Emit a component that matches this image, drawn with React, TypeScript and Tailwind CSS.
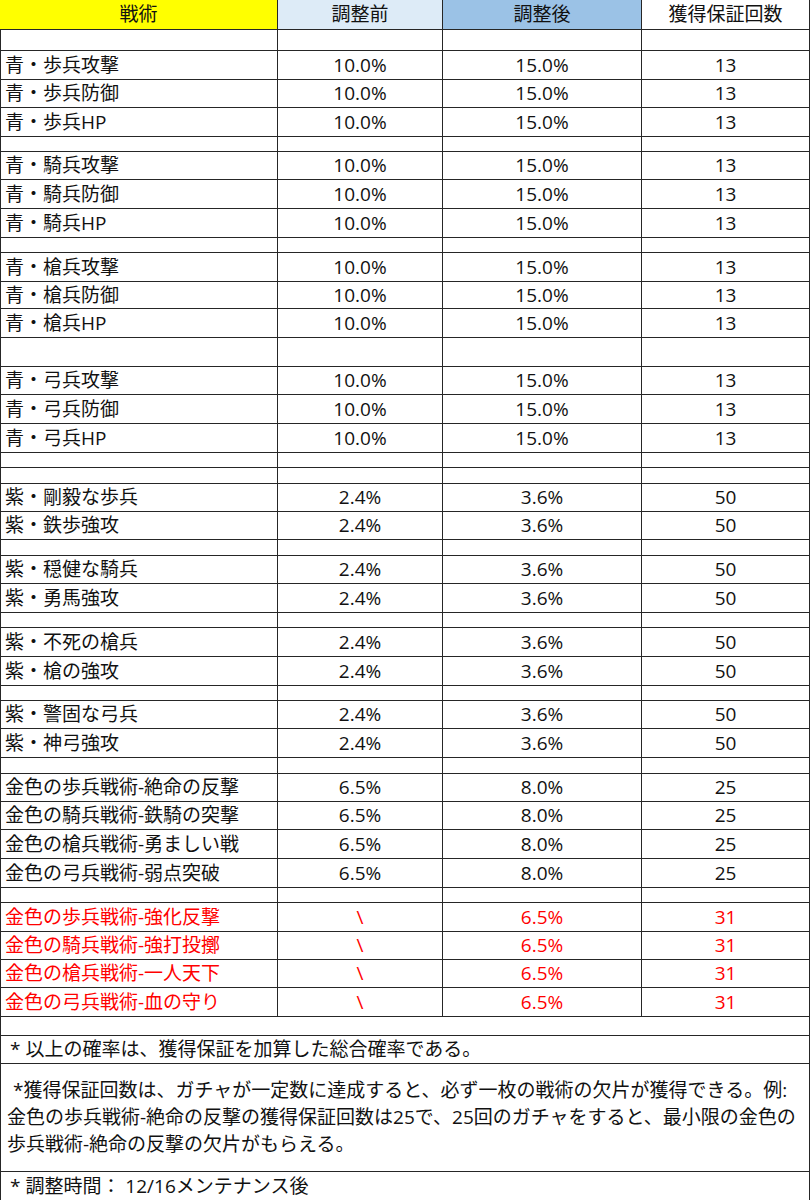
import React from "react";

type Row = {
  h: number;
  n?: string;
  a?: string;
  b?: string;
  c?: string;
  red?: boolean;
};

const H: Record<number, string> = {
  15: "h-[15px]",
  16: "h-[16px]",
  19: "h-[19px]",
  21: "h-[21px]",
  27: "h-[27px]",
  28: "h-[28px]",
  29: "h-[29px]",
  30: "h-[30px]",
};

const blue = (n: string, h: number): Row => ({ n, a: "10.0%", b: "15.0%", c: "13", h });
const purple = (n: string, h: number): Row => ({ n, a: "2.4%", b: "3.6%", c: "50", h });
const gold = (n: string, h: number): Row => ({ n, a: "6.5%", b: "8.0%", c: "25", h });
const red = (n: string, h: number): Row => ({ n, a: "\\", b: "6.5%", c: "31", h, red: true });

const rows: Row[] = [
  { h: 21 },
  blue("青・歩兵攻撃", 29),
  blue("青・歩兵防御", 28),
  blue("青・歩兵HP", 29),
  { h: 15 },
  blue("青・騎兵攻撃", 28),
  blue("青・騎兵防御", 29),
  blue("青・騎兵HP", 29),
  { h: 15 },
  blue("青・槍兵攻撃", 29),
  blue("青・槍兵防御", 27),
  blue("青・槍兵HP", 29),
  { h: 29 },
  blue("青・弓兵攻撃", 28),
  blue("青・弓兵防御", 29),
  blue("青・弓兵HP", 29),
  { h: 15 },
  { h: 16 },
  purple("紫・剛毅な歩兵", 28),
  purple("紫・鉄歩強攻", 28),
  { h: 16 },
  purple("紫・穏健な騎兵", 28),
  purple("紫・勇馬強攻", 29),
  { h: 15 },
  purple("紫・不死の槍兵", 29),
  purple("紫・槍の強攻", 29),
  { h: 15 },
  purple("紫・警固な弓兵", 28),
  purple("紫・神弓強攻", 29),
  { h: 16 },
  gold("金色の歩兵戦術-絶命の反撃", 28),
  gold("金色の騎兵戦術-鉄騎の突撃", 28),
  gold("金色の槍兵戦術-勇ましい戦", 29),
  gold("金色の弓兵戦術-弱点突破", 29),
  { h: 15 },
  red("金色の歩兵戦術-強化反撃", 29),
  red("金色の騎兵戦術-強打投擲", 28),
  red("金色の槍兵戦術-一人天下", 28),
  red("金色の弓兵戦術-血の守り", 29),
];

const grid = "grid grid-cols-[278px_165px_199px_168px] w-[810px] border-b border-[#262626]";

function DataRow({ r }: { r: Row }) {
  const color = r.red ? "text-[#ff0000]" : "text-[#111111]";
  return (
    <div className={`${grid} ${H[r.h]} ${color}`}>
      <div className="border-l border-r border-[#262626] flex items-center pl-[4px] whitespace-nowrap">{r.n ?? ""}</div>
      <div className="border-r border-[#262626] flex items-center justify-center">{r.a ?? ""}</div>
      <div className="border-r border-[#262626] flex items-center justify-center">{r.b ?? ""}</div>
      <div className="border-r border-[#262626] flex items-center justify-center">{r.c ?? ""}</div>
    </div>
  );
}

export default function App() {
  return (
    <div
      className="w-[811px] h-[1200px] bg-white text-[19px] leading-[27px] text-[#111111] overflow-hidden"
      style={{ fontFamily: '"Open Sans", "Noto Sans CJK JP", sans-serif' }}
    >
      <div className={`${grid} h-[30px]`}>
        <div className="bg-[#ffff00] border-r border-[#262626] flex items-center justify-center">戦術</div>
        <div className="bg-[#ddebf7] border-r border-[#262626] flex items-center justify-center">調整前</div>
        <div className="bg-[#9bc2e6] border-r border-[#262626] flex items-center justify-center">調整後</div>
        <div className="bg-white border-r border-[#262626] flex items-center justify-center">獲得保証回数</div>
      </div>
      {rows.map((r, i) => (
        <DataRow key={i} r={r} />
      ))}
      <div className="w-[810px] h-[19px] border-l border-r border-b border-[#262626]" />
      <div className="w-[810px] h-[28px] border-l border-r border-b border-[#262626] flex items-center pl-[9px] whitespace-nowrap">
        * 以上の確率は、獲得保証を加算した総合確率である。
      </div>
      <div className="w-[810px] h-[108px] border-l border-r border-b border-[#262626] flex flex-col justify-center pl-[6px] whitespace-nowrap">
        <div className="pl-[6px]">*獲得保証回数は、ガチャが一定数に達成すると、必ず一枚の戦術の欠片が獲得できる。例:</div>
        <div>金色の歩兵戦術-絶命の反撃の獲得保証回数は25で、25回のガチャをすると、最小限の金色の</div>
        <div>歩兵戦術-絶命の反撃の欠片がもらえる。</div>
      </div>
      <div className="w-[810px] h-[29px] border-l border-r border-b border-[#262626] flex items-center pl-[9px] whitespace-nowrap">
        * 調整時間： 12/16メンテナンス後
      </div>
    </div>
  );
}
